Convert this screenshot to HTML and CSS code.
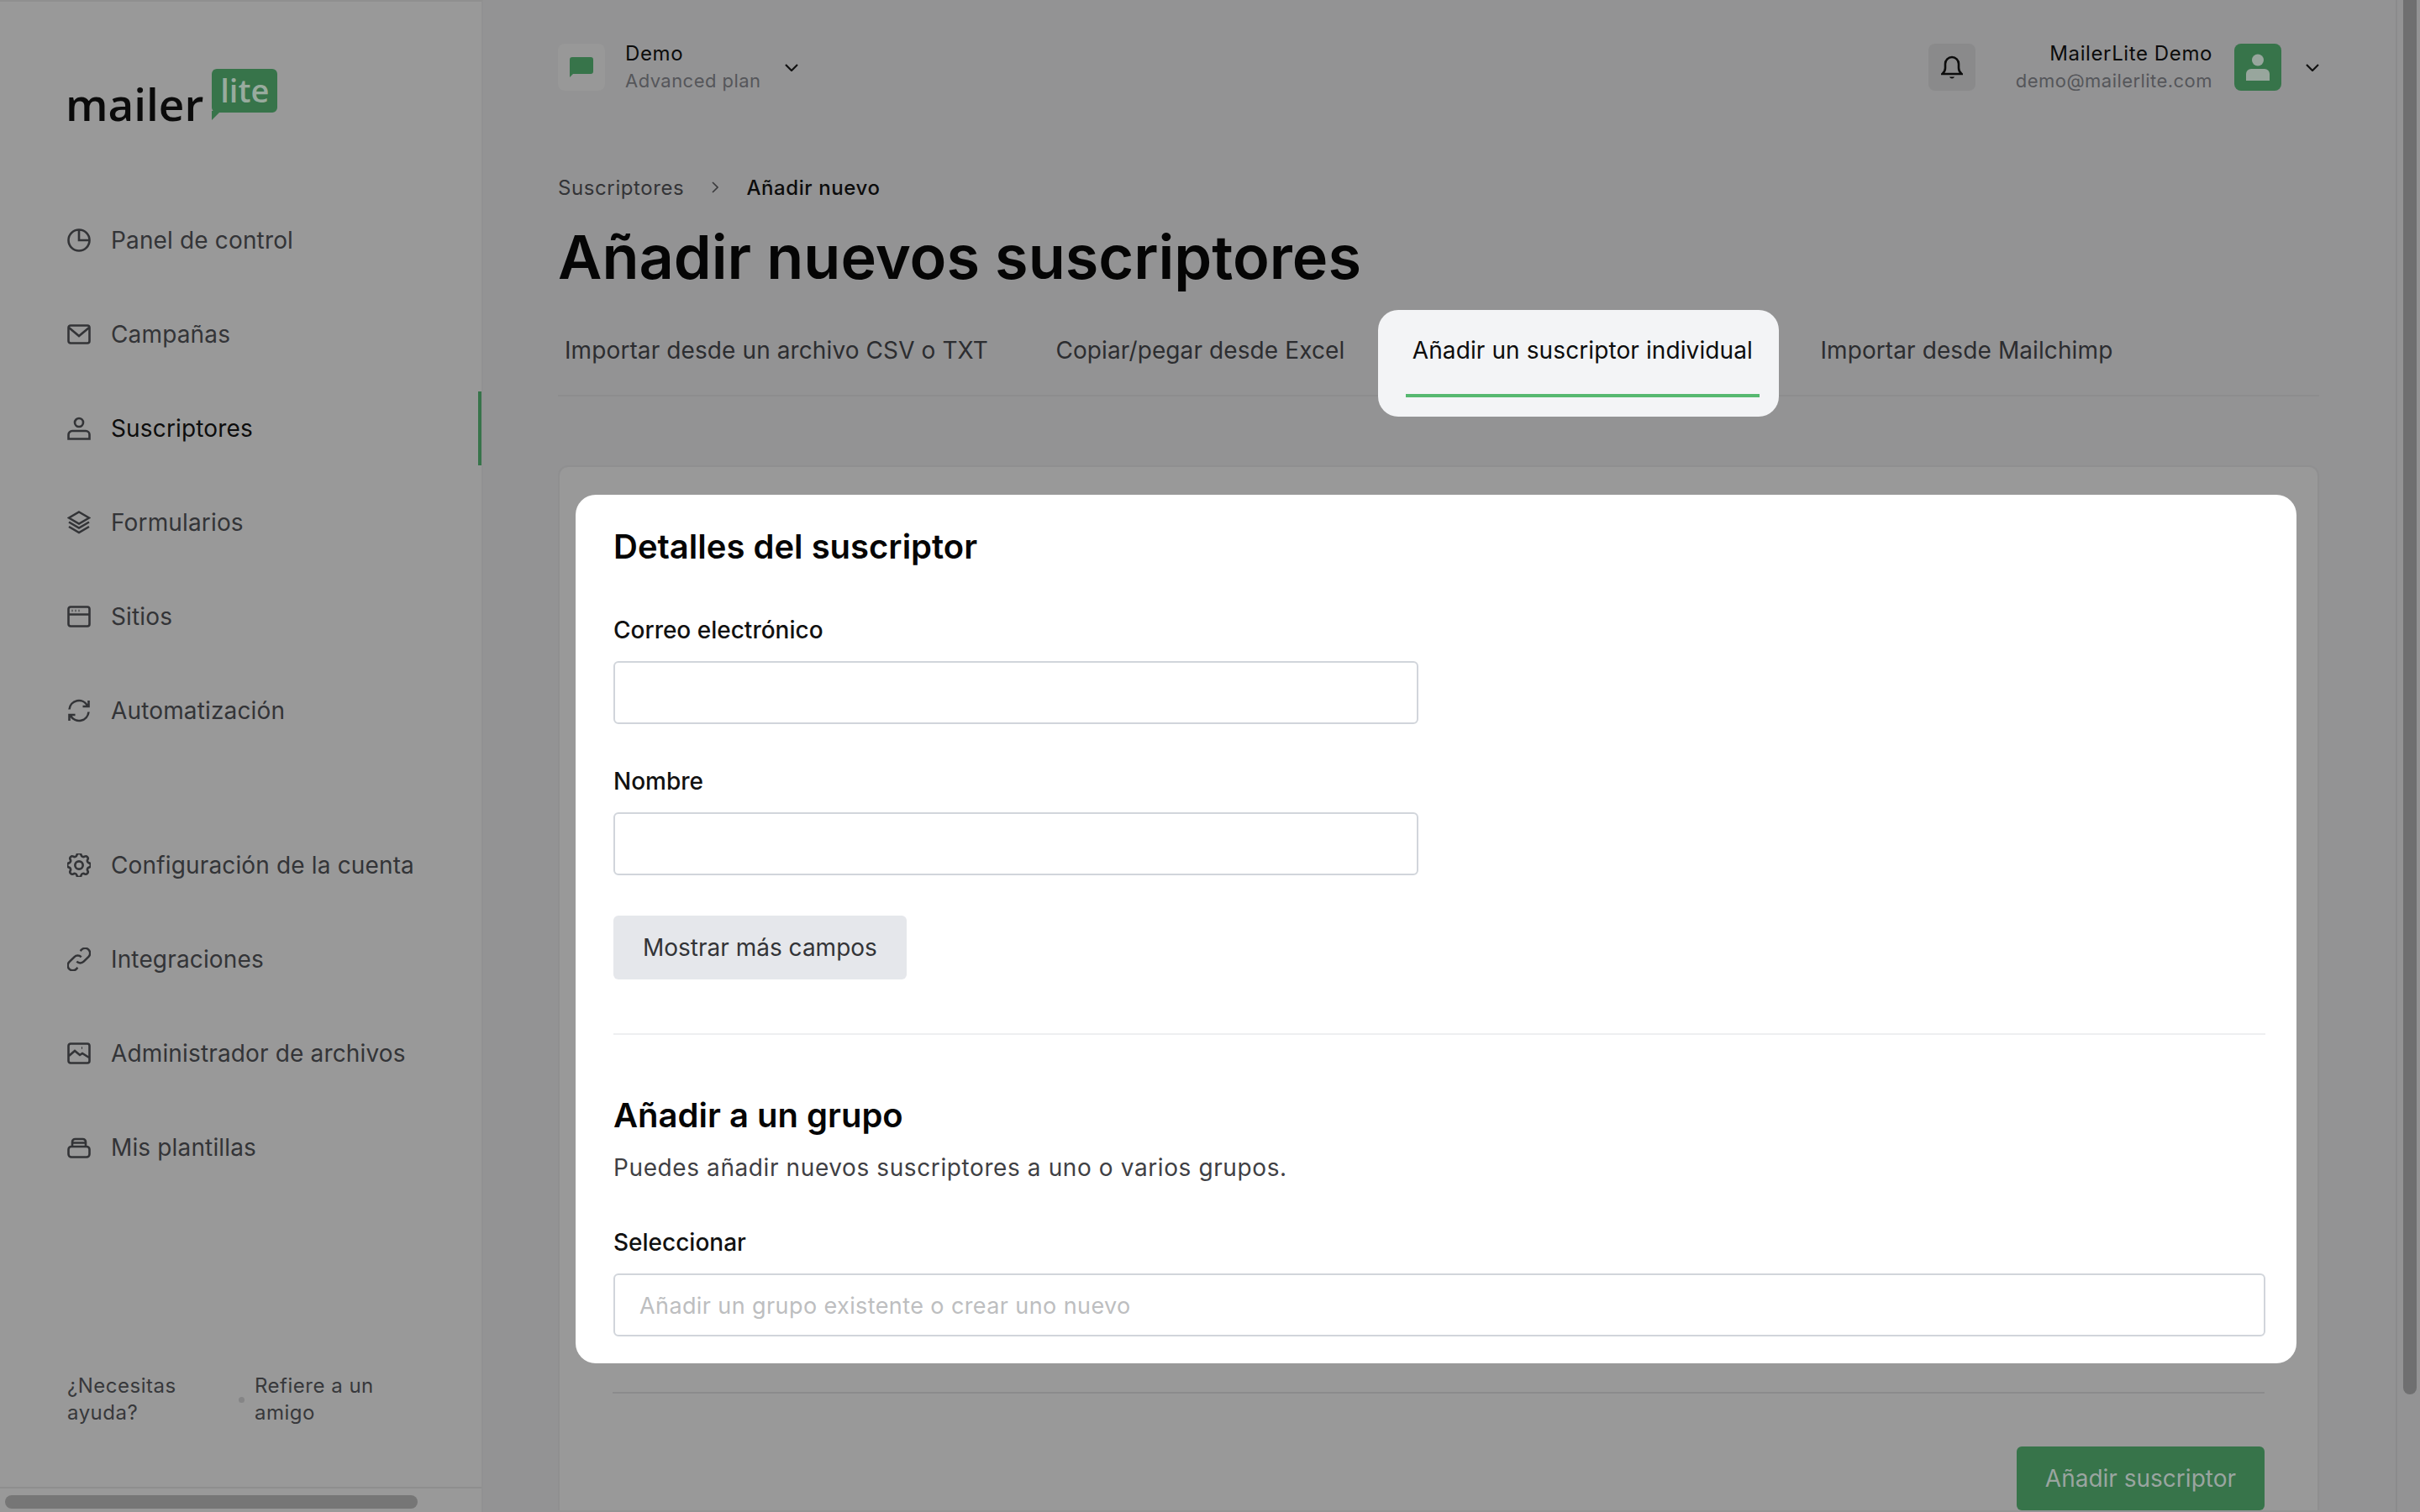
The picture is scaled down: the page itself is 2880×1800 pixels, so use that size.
FILE: index.html
```html
<!DOCTYPE html>
<html lang="es">
<head>
    <meta charset="UTF-8">
    <title>Añadir nuevos suscriptores</title>
    <link rel="stylesheet" href="styles.css">
</head>
<body>
    <div class="app">
        <aside class="sidebar">
            <div class="logo">
                <span class="logo-word">mailer</span>
                <span class="logo-bubble">lite</span>
            </div>

            <nav class="nav">
                <a class="nav-item"><svg class="nav-icon" viewBox="0 0 28 28"><circle cx="14" cy="14" r="12.5"/><path d="M14 1.500V14h12.500"/></svg>Panel de control</a>
                <a class="nav-item"><svg class="nav-icon" viewBox="0 0 28 28"><rect x="1.500" y="3.500" width="25" height="21" rx="2.500"/><path d="M2 6l12 10L26 6"/></svg>Campañas</a>
                <a class="nav-item active"><svg class="nav-icon" viewBox="0 0 28 28"><circle cx="14" cy="7" r="5"/><path d="M1.500 26.500v-5a4.500 4.500 0 0 1 4.500-4.500h16a4.500 4.500 0 0 1 4.500 4.500v5z"/></svg>Suscriptores</a>
                <a class="nav-item"><svg class="nav-icon" viewBox="0 0 28 28"><path d="M14 1.500l12 7-12 7-12-7zM2 13.500l12 7 12-7M2 19l12 7 12-7"/></svg>Formularios</a>
                <a class="nav-item"><svg class="nav-icon" viewBox="0 0 28 28"><rect x="1.500" y="2.500" width="25" height="23" rx="2.500"/><path d="M2 11.500h24M5.500 7h1M9.500 7h1M13.500 7h1"/></svg>Sitios</a>
                <a class="nav-item"><svg class="nav-icon" viewBox="0 0 28 28"><path d="M2.500 12.500A11.500 11.500 0 0 1 24 8M25.500 15.500A11.500 11.500 0 0 1 4 20M25.500 2v7h-7M2.500 26v-7h7"/></svg>Automatización</a>

                <div class="nav-gap"></div>

                <a class="nav-item"><svg class="nav-icon thin" viewBox="3 3 18 18"><path d="M10.325 4.317c.426-1.756 2.924-1.756 3.350 0a1.724 1.724 0 002.573 1.066c1.543-.94 3.310.826 2.370 2.370a1.724 1.724 0 001.065 2.572c1.756.426 1.756 2.924 0 3.350a1.724 1.724 0 00-1.066 2.573c.94 1.543-.826 3.310-2.370 2.370a1.724 1.724 0 00-2.572 1.065c-.426 1.756-2.924 1.756-3.350 0a1.724 1.724 0 00-2.573-1.066c-1.543.94-3.310-.826-2.370-2.370a1.724 1.724 0 00-1.065-2.572c-1.756-.426-1.756-2.924 0-3.350a1.724 1.724 0 001.066-2.573c-.94-1.543.826-3.310 2.370-2.370.996.608 2.296.07 2.572-1.065z"/><circle cx="12" cy="12" r="3"/></svg>Configuración de la cuenta</a>
                <a class="nav-item"><svg class="nav-icon thin" viewBox="2.500 2.500 19 19"><path d="M13.828 10.172a4 4 0 00-5.656 0l-4 4a4 4 0 105.656 5.656l1.102-1.101m-.758-4.899a4 4 0 005.656 0l4-4a4 4 0 00-5.656-5.656l-1.100 1.100"/></svg>Integraciones</a>
                <a class="nav-item"><svg class="nav-icon" viewBox="0 0 28 28"><rect x="1.500" y="2.500" width="25" height="23" rx="2.500"/><path d="M2 17l7-6 6 5 3-2 8 5M17 7.500h1"/></svg>Administrador de archivos</a>
                <a class="nav-item"><svg class="nav-icon" viewBox="0 0 28 28"><rect x="1.500" y="13" width="25" height="12.500" rx="3.500"/><path d="M6 13V7.500a3.500 3.500 0 0 1 3.500-3.500h9A3.500 3.500 0 0 1 22 7.500V13M6 8.500h16"/></svg>Mis plantillas</a>
            </nav>

            <div class="sidebar-footer">
                <a class="footer-link help-link">¿Necesitas ayuda?</a>
                <span class="footer-dot"></span>
                <a class="footer-link">Refiere a un amigo</a>
            </div>

            <div class="sidebar-scroll"><div class="sidebar-thumb"></div></div>
        </aside>

        <main class="main">
            <header class="topbar">
                <div class="account">
                    <div class="account-icon">
                        <svg viewBox="0 0 28 24" width="28" height="24"><path d="M3 0h22a3 3 0 0 1 3 3v14a3 3 0 0 1-3 3H4l-4 4V3a3 3 0 0 1 3-3z"/></svg>
                    </div>
                    <div class="account-text">
                        <div class="text-strong">Demo</div>
                        <div class="text-muted">Advanced plan</div>
                    </div>
                    <svg class="chevron" viewBox="0 0 16 9"><path d="M1 1l7 7 7-7"/></svg>
                </div>
                <div class="user">
                    <div class="bell-box">
                        <svg viewBox="0 0 26 30" width="26" height="30"><path d="M1.500 23c2.500-2 3.500-4 3.500-7v-5a8 8 0 0 1 16 0v5c0 3 1 5 3.500 7z"/><path class="bell-clapper" d="M10 26.500c1 2.500 5 2.500 6 0z"/></svg>
                    </div>
                    <div class="user-text">
                        <div class="text-strong">MailerLite Demo</div>
                        <div class="text-muted">demo@mailerlite.com</div>
                    </div>
                    <div class="avatar">
                        <svg viewBox="0 0 28 32" width="28" height="32"><circle cx="14" cy="7.500" r="7"/><path d="M0 32v-8a6 6 0 0 1 6-6h16a6 6 0 0 1 6 6v8z"/></svg>
                    </div>
                    <svg class="chevron" viewBox="0 0 16 9"><path d="M1 1l7 7 7-7"/></svg>
                </div>
            </header>

            <div class="breadcrumb">
                <span>Suscriptores</span>
                <svg class="crumb-sep" viewBox="0 0 8 14"><path d="M1 1l6 6-6 6"/></svg>
                <span class="crumb-current">Añadir nuevo</span>
            </div>

            <h1 class="page-title">Añadir nuevos suscriptores</h1>

            <div class="tabs">
                <a class="tab">Importar desde un archivo CSV o TXT</a>
                <a class="tab">Copiar/pegar desde Excel</a>
                <a class="tab tab-active">Añadir un suscriptor individual</a>
                <a class="tab">Importar desde Mailchimp</a>
            </div>

            <section class="card">
                <form class="highlight">
                    <h2 class="section-title">Detalles del suscriptor</h2>
                    <label class="field-label first">Correo electrónico</label>
                    <input class="input input-half" type="text">
                    <label class="field-label">Nombre</label>
                    <input class="input input-half" type="text">
                    <button class="btn-more" type="button">Mostrar más campos</button>
                    <hr class="divider">
                    <h2 class="section-title">Añadir a un grupo</h2>
                    <p class="section-text">Puedes añadir nuevos suscriptores a uno o varios grupos.</p>
                    <label class="field-label">Seleccionar</label>
                    <input class="input" type="text" placeholder="Añadir un grupo existente o crear uno nuevo">
                </form>
                <div class="card-footer">
                    <button class="btn-submit" type="button">Añadir suscriptor</button>
                </div>
            </section>
        </main>

        <div class="page-scroll"><div class="page-thumb"></div></div>
    </div>
</body>
</html>
```

FILE: styles.css
```css
* {
    margin: 0;
    padding: 0;
    box-sizing: border-box;
    font-family: 'Inter', sans-serif;
}

body {
    background-color: #939394;
    height: 100vh;
    overflow: hidden;
}

.app {
    display: flex;
    height: 1800px;
}

/* Sidebar */
.sidebar {
    width: 575px;
    flex-shrink: 0;
    display: flex;
    flex-direction: column;
    background-color: #999999;
    border-right: 2px solid #919192;
    border-top: 2px solid #8f8f8f;
}

.logo {
    display: flex;
    align-items: flex-start;
    height: 239.600px;
    padding: 80px 0 0 78px;
    position: relative;
}

.logo-word {
    font-family: 'Open Sans', sans-serif;
    font-size: 53px;
    font-weight: 600;
    line-height: 54px;
    color: #0b0b0b;
    margin-top: 15px;
}

.logo-bubble {
    position: relative;
    width: 78px;
    height: 52px;
    margin-left: 10px;
    background-color: #37744a;
    border-radius: 6px;
    font-family: 'Open Sans', sans-serif;
    font-size: 38px;
    font-weight: 600;
    line-height: 50px;
    text-align: center;
    color: #98ab9e;
}

.logo-bubble::after {
    content: "";
    position: absolute;
    left: 0;
    top: 50px;
    border-top: 11px solid #37744a;
    border-right: 11px solid transparent;
}

.nav {
    display: flex;
    flex-direction: column;
    gap: 24px;
}

.nav-gap {
    height: 48px;
}

.nav-item {
    height: 88px;
    display: flex;
    align-items: center;
    gap: 24px;
    padding-left: 80px;
    font-size: 28px;
    letter-spacing: 0.15px;
    color: #333437;
    position: relative;
}

.nav-item.active {
    color: #0d0d0d;
}

.nav-item.active::after {
    content: "";
    position: absolute;
    right: 0;
    top: 0;
    bottom: 0;
    width: 4px;
    background-color: #37744a;
}

.nav-icon {
    width: 28px;
    height: 28px;
    fill: none;
    stroke: #333437;
    stroke-width: 2.600;
    flex-shrink: 0;
}

.nav-icon.thin {
    stroke-width: 1.700;
}

.sidebar-footer {
    display: flex;
    align-items: center;
    margin-top: auto;
    padding-left: 80px;
    margin-bottom: 72px;
}

.footer-link {
    width: 180px;
    font-size: 24px;
    line-height: 32px;
    letter-spacing: 0.5px;
    color: #37383b;
}

.help-link {
    width: 204px;
}

.footer-dot {
    width: 7px;
    height: 7px;
    margin-right: 12px;
    border-radius: 50%;
    background-color: #858586;
}

.sidebar-scroll {
    height: 30px;
    padding: 8px 0 6px 6px;
    border-top: 2px solid #8e8e8e;
}

.sidebar-thumb {
    width: 491px;
    height: 16px;
    border-radius: 8px;
    background-color: #767676;
}

/* Main */
.main {
    flex: 1;
    min-width: 0;
    padding: 52px 91px 0 89px;
    overflow: hidden;
}

.topbar {
    display: flex;
    justify-content: space-between;
    align-items: center;
    height: 56px;
}

.account,
.user {
    display: flex;
    align-items: center;
}

.account-icon {
    width: 56px;
    height: 56px;
    display: flex;
    align-items: center;
    justify-content: center;
    border-radius: 8px;
    background-color: #989898;
}

.account-icon svg {
    fill: #37744a;
}

.account-text {
    margin: 0 29px 0 24px;
}

.text-strong {
    font-size: 24px;
    line-height: 33px;
    letter-spacing: 0.6px;
    color: #0c0c0c;
}

.text-muted {
    font-size: 22px;
    line-height: 33px;
    letter-spacing: 0.45px;
    color: #55565a;
}

.chevron {
    width: 16px;
    height: 9px;
    fill: none;
    stroke: #111111;
    stroke-width: 2.200;
}

.bell-box {
    width: 56px;
    height: 56px;
    display: flex;
    align-items: center;
    justify-content: center;
    border-radius: 8px;
    background-color: #8a8a8b;
}

.bell-box svg {
    fill: none;
    stroke: #0c0c0c;
    stroke-width: 2.600;
}

.bell-box .bell-clapper {
    fill: #0c0c0c;
    stroke: none;
}

.user-text {
    margin: 0 26px 0 48px;
    text-align: right;
}

.avatar {
    width: 56px;
    height: 56px;
    margin-right: 29px;
    display: flex;
    align-items: center;
    justify-content: center;
    border-radius: 8px;
    background-color: #37744a;
}

.avatar svg {
    fill: #98a69d;
}

.breadcrumb {
    display: flex;
    align-items: center;
    margin-top: 98px;
    height: 34px;
    font-size: 24px;
    letter-spacing: 0.6px;
    color: #333437;
}

.crumb-sep {
    width: 8px;
    height: 14px;
    margin: 0 33px 0 33px;
    fill: none;
    stroke: #3a3a3d;
    stroke-width: 1.600;
}

.crumb-current {
    font-weight: 500;
    color: #0c0c0c;
}

.page-title {
    margin-top: 21px;
    font-size: 72px;
    font-weight: 600;
    line-height: 90px;
    color: #050505;
}

.tabs {
    display: flex;
    gap: 64.500px;
    margin-top: 46px;
    height: 75px;
    border-bottom: 2px solid #8d8d8e;
}

.tab {
    position: relative;
    padding: 0 8px;
    height: 75px;
    font-size: 28px;
    line-height: 40px;
    letter-spacing: 0.1px;
    color: #2c2d30;
}

.tab-active {
    color: #0c0c0c;
    z-index: 0;
}

.tab-active::before {
    content: "";
    position: absolute;
    z-index: -1;
    top: -28px;
    bottom: -24px;
    left: -33px;
    right: -23px;
    border-radius: 24px;
    background-color: #f3f4f6;
}

.tab-active::after {
    content: "";
    position: absolute;
    left: 0;
    right: 0;
    bottom: -1px;
    height: 4px;
    background-color: #56b870;
}

.card {
    margin-top: 82px;
    padding-top: 33px;
    border: 2px solid #8f8f90;
    border-bottom: none;
    border-radius: 12px 12px 0 0;
    background-color: #999999;
}

.highlight {
    display: flex;
    flex-direction: column;
    align-items: flex-start;
    margin: 0 25px 0 19px;
    padding: 37px 37px 32px 45px;
    border-radius: 24px;
    background-color: #ffffff;
}

.section-title {
    font-size: 40px;
    font-weight: 600;
    line-height: 50px;
    color: #050505;
}

.field-label {
    margin-top: 50px;
    margin-bottom: 19px;
    font-size: 28px;
    font-weight: 500;
    line-height: 36px;
    color: #111111;
}

.field-label.first {
    margin-top: 56px;
}

.input {
    width: 100%;
    height: 75px;
    padding: 2px 29px 0;
    border: 2px solid #d1d5db;
    border-radius: 6px;
    font-size: 27px;
    background-color: #ffffff;
}

.input::placeholder {
    color: #bdbec0;
    letter-spacing: 0.4px;
}

.input-half {
    width: 958px;
}

.btn-more {
    margin-top: 48px;
    height: 76px;
    padding: 0 35px;
    border: none;
    border-radius: 6px;
    font-size: 28px;
    color: #333437;
    background-color: #e5e7eb;
}

.divider {
    width: 100%;
    margin: 64px 0 71px;
    border: none;
    border-top: 2px solid #eeeff1;
}

.section-text {
    margin-top: 19px;
    margin-bottom: 3px;
    font-size: 28px;
    line-height: 36px;
    letter-spacing: 0.6px;
    color: #3f4044;
}

.card-footer {
    display: flex;
    justify-content: flex-end;
    margin: 34px 63px 0;
    padding-top: 63px;
    border-top: 2px solid #8b8b8c;
}

.btn-submit {
    height: 76px;
    padding: 0 34px;
    border: none;
    border-radius: 6px;
    font-size: 28px;
    color: #9aa5a0;
    background-color: #37744a;
}

/* Page scrollbar */
.page-scroll {
    width: 29px;
    flex-shrink: 0;
    padding-left: 7px;
    border-left: 2px solid #8b8b8c;
}

.page-thumb {
    width: 16px;
    height: 1660px;
    border-radius: 0 0 8px 8px;
    background-color: #6f6f70;
}
```
